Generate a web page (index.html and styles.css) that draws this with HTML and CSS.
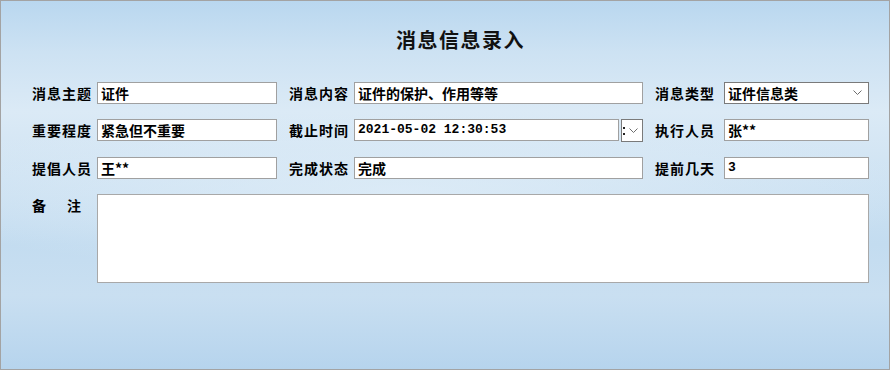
FILE: index.html
```html
<!DOCTYPE html>
<html lang="zh-CN">
    <head>
        <meta charset="utf-8">
        <title>消息信息录入</title>
        <meta name="viewport" content="width=device-width">
        <link rel="stylesheet" href="styles.css">
    </head>
    <body>
        <div class="window">
            <h1 class="title">消息信息录入</h1>
            <form class="msg-form">
                <div class="row">
                    <div class="field">
                        <label class="lbl">消息主题</label>
                        <div class="box w-s">证件</div>
                    </div>
                    <div class="field">
                        <label class="lbl">消息内容</label>
                        <div class="box w-l">证件的保护、作用等等</div>
                    </div>
                    <div class="field">
                        <label class="lbl lbl-wide">消息类型</label>
                        <div class="box select w-r">
                            <span>证件信息类</span>
                            <svg class="chev" width="9" height="6" viewBox="0 0 9 6"><path d="M0.5 0.5 L4.5 4.5 L8.5 0.5" fill="none" stroke="#6d6d6d" stroke-width="1"/></svg>
                        </div>
                    </div>
                </div>
                <div class="row">
                    <div class="field">
                        <label class="lbl">重要程度</label>
                        <div class="box w-s">紧急但不重要</div>
                    </div>
                    <div class="field">
                        <label class="lbl">截止时间</label>
                        <div class="date">
                            <div class="box date-text">2021-05-02 12:30:53</div>
                            <div class="date-btn">
                                <!-- spinner colon, cut off by the button edge -->
                                <svg width="3" height="10" viewBox="0 0 3 10"><rect x="0" y="1" width="2" height="2" fill="#222"/><rect x="0" y="7" width="2" height="2" fill="#222"/></svg>
                                <svg width="9" height="6" viewBox="0 0 9 6"><path d="M0.5 0.5 L4.5 4.5 L8.5 0.5" fill="none" stroke="#6d6d6d" stroke-width="1"/></svg>
                            </div>
                        </div>
                    </div>
                    <div class="field">
                        <label class="lbl lbl-wide">执行人员</label>
                        <div class="box w-r">张**</div>
                    </div>
                </div>
                <div class="row">
                    <div class="field">
                        <label class="lbl">提倡人员</label>
                        <div class="box w-s">王**</div>
                    </div>
                    <div class="field">
                        <label class="lbl">完成状态</label>
                        <div class="box w-l">完成</div>
                    </div>
                    <div class="field">
                        <label class="lbl lbl-wide">提前几天</label>
                        <div class="box w-r num">3</div>
                    </div>
                </div>
                <div class="row">
                    <div class="field">
                        <label class="lbl lbl-note">备<span class="gap"></span>注</label>
                        <div class="box memo"></div>
                    </div>
                </div>
            </form>
        </div>
    </body>
</html>
```

FILE: styles.css
```css
html, body {
    margin: 0;
    padding: 0;
}

body {
    font-family: "Noto Sans CJK SC", "Liberation Sans", sans-serif;
    color: #000000;
}

.window {
    box-sizing: border-box;
    width: 890px;
    height: 370px;
    border: 1px solid #a3a3a3;
    padding: 27px 0 0 31px;
    background:
        radial-gradient(ellipse 60% 22% at 45% 52%, rgba(225, 238, 248, 0.7), rgba(225, 238, 248, 0) 100%),
        linear-gradient(to bottom, #b9d7ef 0%, #cde2f3 14%, #dbeaf6 30%, #cfe3f3 48%, #c3dcf0 66%, #c9dff1 80%, #b6d4ed 100%);
}

.title {
    margin: 0 0 30px;
    text-align: center;
    font-size: 20px;
    line-height: 24px;
    font-weight: bold;
    letter-spacing: 1.5px;
    color: #111111;
}

.msg-form {
    display: flex;
    flex-direction: column;
    gap: 15px;
}

.row {
    display: flex;
    gap: 12px;
}

.field {
    display: flex;
}

.lbl {
    width: 65px;
    font-size: 14px;
    line-height: 22px;
    font-weight: bold;
    letter-spacing: 1px;
    white-space: nowrap;
}

.lbl-wide {
    width: 69px;
}

.lbl-note {
    display: flex;
    line-height: 14px;
    padding-top: 4px;
}

.lbl-note .gap {
    width: 20px;
}

.box {
    box-sizing: border-box;
    height: 22px;
    border: 1px solid #a0a0a0;
    background-color: #ffffff;
    padding: 0 3px;
    font-size: 14px;
    line-height: 20px;
    font-weight: bold;
    white-space: nowrap;
    overflow: hidden;
}

.w-s {
    width: 180px;
}

.w-l {
    width: 289px;
}

.w-r {
    width: 145px;
}

.num {
    font-family: "Liberation Mono", monospace;
    font-size: 13px;
}

.select {
    display: flex;
    justify-content: space-between;
    align-items: center;
    border-color: #7a7a7a;
    padding-right: 6px;
}

.select span {
    line-height: 20px;
}

.date {
    display: flex;
    gap: 2px;
    width: 289px;
}

.date-text {
    flex: 1;
    font-family: "Liberation Mono", monospace;
    font-size: 13px;
}

.date-btn {
    box-sizing: border-box;
    width: 22px;
    height: 23px;
    border: 1px solid #7a7a7a;
    background-color: #ffffff;
    display: flex;
    align-items: center;
    gap: 3px;
    padding-left: 1px;
}

.memo {
    width: 772px;
    height: 89px;
    border-color: #a8a8a8;
}
```
